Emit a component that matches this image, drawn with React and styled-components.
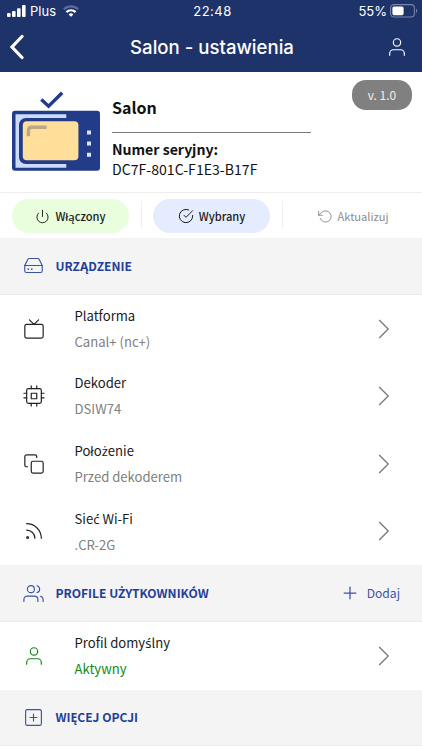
import styled, { createGlobalStyle } from "styled-components";
import {
  FiCheckCircle,
  FiCopy,
  FiCpu,
  FiHardDrive,
  FiPlus,
  FiPlusSquare,
  FiPower,
  FiRotateCcw,
  FiRss,
  FiTv,
  FiUser,
  FiUsers,
} from "react-icons/fi";

const deviceSettings = [
  { icon: FiTv, title: "Platforma", value: "Canal+ (nc+)" },
  { icon: FiCpu, title: "Dekoder", value: "DSIW74" },
  { icon: FiCopy, title: "Położenie", value: "Przed dekoderem" },
  { icon: FiRss, title: "Sieć Wi-Fi", value: ".CR-2G" },
];

// the CJK face has no ć, ś, ż of its own, so those letters use Noto Sans
function Label({ children }) {
  return children
    .split(/([ćśżŻ])/)
    .map((part, i) => (i % 2 ? <Accent key={i}>{part}</Accent> : part));
}

function StatusBar() {
  return (
    <Status>
      <Carrier>
        <svg width="19" height="12" viewBox="0 0 19 12" fill="#fff">
          <rect x="0" y="8" width="3.6" height="4" rx="1" />
          <rect x="5" y="6" width="3.6" height="6" rx="1" />
          <rect x="10" y="3.2" width="3.6" height="8.8" rx="1" />
          <rect x="15" y="0" width="3.6" height="12" rx="1" />
        </svg>
        <CarrierName>Plus</CarrierName>
        <svg width="16" height="12" viewBox="0 0 16 12" fill="none">
          <path
            d="M.9 4.2a10.2 10.2 0 0 1 14.2 0"
            stroke="#5b6a9e"
            strokeWidth="2.2"
          />
          <path
            d="M3.4 7.1a6.6 6.6 0 0 1 9.2 0"
            stroke="#fff"
            strokeWidth="2.2"
          />
          <path d="M8 11.8 5.6 9.4a3.5 3.5 0 0 1 4.8 0z" fill="#fff" />
        </svg>
      </Carrier>
      <Clock>22:48</Clock>
      <Battery>
        55%
        <svg width="28" height="14" viewBox="0 0 28 14">
          <rect
            x=".6"
            y=".6"
            width="23.8"
            height="12.4"
            rx="3.4"
            fill="none"
            stroke="#7883ad"
            strokeWidth="1.1"
          />
          <rect x="2.4" y="2.4" width="11.2" height="8.8" rx="1.6" fill="#fff" />
          <path d="M26 4.8c1.6.7 1.6 3.4 0 4.1z" fill="#7883ad" />
        </svg>
      </Battery>
    </Status>
  );
}

function DevicePicture() {
  return (
    <svg width="88" height="80" viewBox="0 0 88 80" fill="none">
      <path d="m29.3 8.6 7.3 6.6L50.2 1.8" stroke="#233c89" strokeWidth="3.4" />
      <rect y="19.7" width="88" height="60" rx="3" fill="#233c89" />
      <path d="M3.5 23.3h50.8v53.400H3.500z" fill="#cbdafd" />
      <path d="M55 27.100H14c-4 0-7 3-7 7v31.800c0 4 3 7 7 7h41z" fill="#233c89" />
      <rect x="10.800" y="30.300" width="55.600" height="39" rx="4" fill="#ffdf99" />
      <path
        d="M16.400 45.300v-5.300c0-2.500 1-3.700 3.500-3.700h14.800"
        stroke="#bba78a"
        strokeWidth="3.400"
      />
      <path d="M75 39.500h4v4h-4zM75 50.500h4v4h-4zM75 61.700h4v4h-4z" fill="#dce5fd" />
    </svg>
  );
}

function Chevron() {
  return (
    <svg width="12" height="20" viewBox="0 0 12 20" fill="none">
      <path d="m1.200 1 9 9-9 9" stroke="#777" strokeWidth="1.300" />
    </svg>
  );
}

function SettingRow({ icon: Icon, title, value, active }) {
  return (
    <Row>
      <IconSlot $color={active ? "#138a13" : "#222"}>
        <Icon size={22} />
      </IconSlot>
      <RowText>
        <RowTitle>
          <Label>{title}</Label>
        </RowTitle>
        <RowValue $active={active}>{value}</RowValue>
      </RowText>
      <Chevron />
    </Row>
  );
}

function SectionBar({ icon: Icon, title, children }) {
  return (
    <Section>
      <IconSlot $color="#3b52a5">
        <Icon size={21} />
      </IconSlot>
      <SectionTitle>
        <Label>{title}</Label>
      </SectionTitle>
      {children}
    </Section>
  );
}

function App() {
  return (
    <>
      <GlobalStyle />
      <Screen>
        <Header>
          <StatusBar />
          <NavBar>
            <svg width="16" height="26" viewBox="0 0 16 26" fill="none">
              <path
                d="M14 2.500 4 13l10 10.500"
                stroke="#fff"
                strokeWidth="3.200"
                strokeLinecap="round"
              />
            </svg>
            <Title>Salon - ustawienia</Title>
            <FiUser size={22} />
          </NavBar>
        </Header>

        <DevicePanel>
          <DevicePicture />
          <DeviceInfo>
            <DeviceName>Salon</DeviceName>
            <SerialLabel>Numer seryjny:</SerialLabel>
            <Serial>DC7F-801C-F1E3-B17F</Serial>
          </DeviceInfo>
          <Version>v. 1.0</Version>
        </DevicePanel>

        <Actions>
          <ActionCell>
            <Pill $bg="#e9fedc">
              <FiPower size={15} />
              Włączony
            </Pill>
          </ActionCell>
          <ActionCell>
            <Pill $bg="#e5ecff">
              <FiCheckCircle size={16} />
              Wybrany
            </Pill>
          </ActionCell>
          <ActionCell>
            <Pill $muted>
              <FiRotateCcw size={15} />
              Aktualizuj
            </Pill>
          </ActionCell>
        </Actions>

        <SectionBar icon={FiHardDrive} title="URZĄDZENIE" />
        <Rows>
          {deviceSettings.map((item) => (
            <SettingRow key={item.title} {...item} />
          ))}
        </Rows>

        <SectionBar icon={FiUsers} title="PROFILE UŻYTKOWNIKÓW">
          <AddButton>
            <FiPlus size={20} />
            Dodaj
          </AddButton>
        </SectionBar>
        <Rows>
          <SettingRow
            icon={FiUser}
            title="Profil domyślny"
            value="Aktywny"
            active
          />
        </Rows>
        <SectionBar icon={FiPlusSquare} title="WIĘCEJ OPCJI" />
      </Screen>
    </>
  );
}

export default App;

const GlobalStyle = createGlobalStyle`
  * {
    box-sizing: border-box;
  }

  body {
    margin: 0;
    background: #fff;
  }

  svg {
    display: block;
    flex: none;
  }
`;

const Screen = styled.div`
  width: 422px;
  height: 750px;
  overflow: hidden;
  background: #fff;
  color: #111;
  font-family: "Noto Sans CJK JP", "Noto Sans", sans-serif;
`;

const Accent = styled.span`
  font-family: "Noto Sans", sans-serif;
  line-height: 1;
`;

const Header = styled.header`
  height: 72px;
  background: #1f336b;
  color: #fff;
  font-family: Inter, sans-serif;
`;

const Status = styled.div`
  display: grid;
  grid-template-columns: 1fr auto 1fr;
  align-items: center;
  height: 22px;
  padding: 0 4px 0 7px;
  font-size: 13px;
`;

const Carrier = styled.div`
  display: flex;
  align-items: center;
`;

const CarrierName = styled.span`
  margin: 0 7px 0 4px;
`;

const Clock = styled.span`
  letter-spacing: 0.5px;
`;

const Battery = styled.div`
  display: flex;
  align-items: center;
  justify-content: flex-end;
  gap: 3px;
`;

const NavBar = styled.div`
  display: grid;
  grid-template-columns: 28px 1fr 28px;
  align-items: center;
  justify-items: end;
  height: 50px;
  padding: 0 14px 0 8px;

  > :first-child {
    justify-self: start;
  }

  > :last-child {
    stroke-width: 1.3;
  }
`;

const Title = styled.h1`
  justify-self: center;
  margin: 0 0 0 8px;
  font-size: 18.6px;
  line-height: 24px;
  font-weight: 500;
`;

const DevicePanel = styled.section`
  display: flex;
  align-items: flex-start;
  height: 120px;
  padding: 19px 10px 0 12px;
`;

const DeviceInfo = styled.div`
  width: 199px;
  margin-left: 12px;
  padding-top: 4px;
`;

const DeviceName = styled.div`
  height: 38px;
  border-bottom: 1px solid #777;
  font-size: 16px;
  line-height: 24px;
  font-weight: 700;
`;

const SerialLabel = styled.div`
  padding-top: 6px;
  font-size: 14.1px;
  line-height: 20px;
  font-weight: 700;
`;

const Serial = styled.div`
  font-size: 14.1px;
  line-height: 20px;
`;

const Version = styled.span`
  width: 60px;
  height: 30px;
  margin: -11px 0 0 auto;
  border-radius: 14px;
  background: #808080;
  color: #eee;
  font-size: 12px;
  line-height: 30px;
  text-align: center;
`;

const Actions = styled.div`
  display: grid;
  grid-template-columns: 141px 141px 1fr;
  height: 46px;
  border-top: 1px solid #ededed;
`;

const ActionCell = styled.div`
  display: flex;
  justify-content: center;
  padding-top: 6px;

  & + & {
    background: linear-gradient(#efefef, #efefef) 0 8px / 1px 28px no-repeat;
  }

  &:last-child {
    padding-left: 2px;
  }
`;

const Pill = styled.button`
  display: flex;
  align-items: center;
  justify-content: center;
  gap: 5px;
  width: 117px;
  height: 34px;
  padding: 0;
  border: 0;
  border-radius: 17px;
  background: ${({ $bg }) => $bg || "transparent"};
  color: ${({ $muted }) => ($muted ? "#8c8c8c" : "#1c1c1c")};
  font-family: inherit;
  font-size: 11.1px;
  line-height: 18px;
  font-weight: ${({ $muted }) => ($muted ? 400 : 500)};

  svg {
    stroke-width: 1.5;
  }
`;

const Section = styled.div`
  display: flex;
  align-items: center;
  height: 56.7px;
  padding: 0 22px 0 21px;
  border-bottom: 1px solid #ececec;
  background: #f4f4f4;
`;

const SectionTitle = styled.h2`
  margin: 0 0 0 10.5px;
  color: #233f98;
  font-size: 12.05px;
  line-height: 18px;
  font-weight: 700;
`;

const IconSlot = styled.span`
  display: flex;
  justify-content: center;
  width: 24px;
  color: ${({ $color }) => $color};

  svg {
    stroke-width: 1.3;
  }

  /* the two lamps of the drive icon */
  line[x2="6.01"],
  line[x2="10.01"] {
    stroke-width: 2;
  }
`;

const AddButton = styled.button`
  display: flex;
  align-items: center;
  gap: 7px;
  margin-left: auto;
  padding: 0;
  border: 0;
  background: none;
  color: #3b52a5;
  font-family: inherit;
  font-size: 12.1px;
  line-height: 20px;

  svg {
    stroke-width: 1.5;
  }
`;

const Rows = styled.div`
  display: flex;
  flex-direction: column;
`;

const Row = styled.div`
  display: flex;
  align-items: center;
  height: 67.65px;
  padding: 0 32.5px 0 22px;
`;

const RowText = styled.div`
  flex: 1;
  margin-left: 28.5px;
  padding-top: 0.4px;
  font-size: 13.1px;
  line-height: 26px;
`;

const RowTitle = styled.div`
  height: 26px;
  color: #1a1a1a;
`;

const RowValue = styled.div`
  color: ${({ $active }) => ($active ? "#138a13" : "#808080")};
`;
